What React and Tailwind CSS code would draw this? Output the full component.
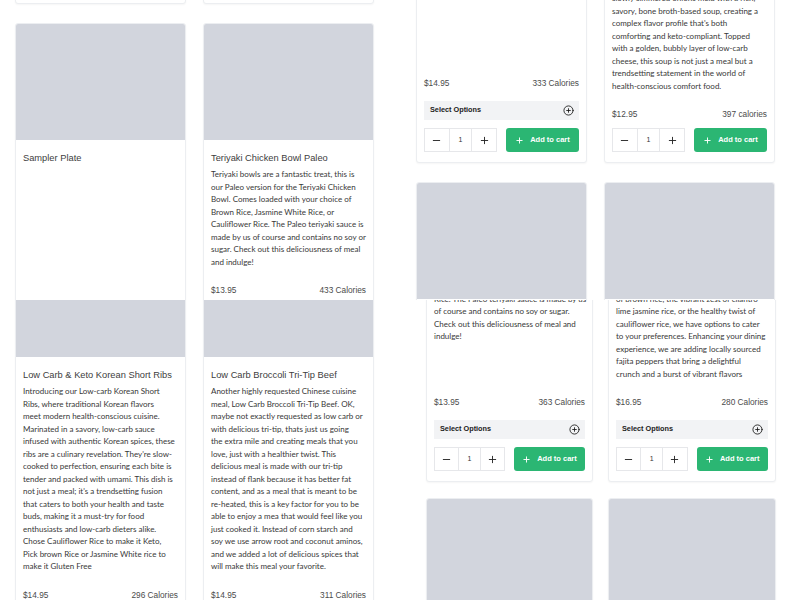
import { Minus, Plus, CirclePlus } from 'lucide-react'

// each quarter of the page is a 400x300 window onto a product grid at a different scroll spot
const Card = ({ width = 'w-[171px]', title, lines = [], price, cal, options, cart }) => (
  <div className={`${width} shrink-0 flex flex-col bg-white border border-[#eceef1] rounded-[3px] shadow-[0_1px_2px_rgba(0,0,0,0.04)] overflow-hidden`}>
    <div className="h-[116px] shrink-0 bg-[#d2d5dd]" />
    <div className="flex-1 flex flex-col px-[7px] pt-[12px] pb-[10px]">
      {title && (
        <h3 className="text-[9.3px] leading-[12px] text-[#404040] font-['Liberation_Sans',Arial,sans-serif] whitespace-nowrap">
          {title}
        </h3>
      )}
      {lines.length > 0 && (
        <p className="mt-[4px] text-[8px] leading-[12.5px] text-[#383838] font-['Lato','Open_Sans',sans-serif]">
          {lines.map((l, i) => (
            <span key={i} className="block whitespace-nowrap">{l}</span>
          ))}
        </p>
      )}
      {price && (
        <div className="mt-auto pt-[16px] flex flex-col font-['Liberation_Sans',Arial,sans-serif]">
          <div className="flex justify-between text-[8.3px] leading-[12px] text-[#4b4b4b]">
            <span>{price}</span>
            <span>{cal}</span>
          </div>
          {options && (
            <div className="mt-[12px] h-[19px] bg-[#f2f3f5] flex items-center justify-between pl-[6px] pr-[5px]">
              <span className="text-[7.3px] font-bold text-[#222]">Select Options</span>
              <CirclePlus size={11} strokeWidth={1.8} color="#111" />
            </div>
          )}
          {cart && (
            <div className="mt-[8px] grid grid-cols-2 gap-[9px] h-[24px]">
              <div className="grid grid-cols-3 border border-[#e6e7ea]">
                <div className="flex items-center justify-center">
                  <Minus size={11} strokeWidth={2} color="#222" />
                </div>
                <div className="flex items-center justify-center border-x border-[#e6e7ea] text-[7px] text-[#333]">1</div>
                <div className="flex items-center justify-center">
                  <Plus size={11} strokeWidth={2} color="#222" />
                </div>
              </div>
              <button className="bg-[#2bb673] rounded-[3px] text-white font-bold text-[7.5px] flex items-center justify-center gap-[6px]">
                <Plus size={9} strokeWidth={2.5} />
                Add to cart
              </button>
            </div>
          )}
        </div>
      )}
    </div>
  </div>
)

const Tile = ({ children }) => (
  <div className="w-[400px] h-[300px] overflow-hidden bg-white flex flex-col">{children}</div>
)

const teriyakiA = [
  'Teriyaki bowls are a fantastic treat, this is',
  'our Paleo version for the Teriyaki Chicken',
  'Bowl. Comes loaded with your choice of',
  'Brown Rice, Jasmine White Rice, or',
  'Cauliflower Rice. The Paleo teriyaki sauce is',
  'made by us of course and contains no soy or',
  'sugar. Check out this deliciousness of meal',
  'and indulge!',
]

const teriyakiB = [
  'Teriyaki bowls are a fantastic treat. Comes',
  'loaded with your choice of Cauliflower',
  'Rice. The Paleo teriyaki sauce is made by us',
  'of course and contains no soy or sugar.',
  'Check out this deliciousness of meal and',
  'indulge!',
]

const shortRibs = [
  'Introducing our Low-carb Korean Short',
  'Ribs, where traditional Korean flavors',
  'meet modern health-conscious cuisine.',
  'Marinated in a savory, low-carb sauce',
  'infused with authentic Korean spices, these',
  "ribs are a culinary revelation. They're slow-",
  'cooked to perfection, ensuring each bite is',
  'tender and packed with umami. This dish is',
  "not just a meal; it's a trendsetting fusion",
  'that caters to both your health and taste',
  'buds, making it a must-try for food',
  'enthusiasts and low-carb dieters alike.',
  'Chose Cauliflower Rice to make it Keto,',
  'Pick brown Rice or Jasmine White rice to',
  'make it Gluten Free',
]

const triTip = [
  'Another highly requested Chinese cuisine',
  'meal, Low Carb Broccoli Tri-Tip Beef. OK,',
  'maybe not exactly requested as low carb or',
  'with delicious tri-tip, thats just us going',
  'the extra mile and creating meals that you',
  'love, just with a healthier twist. This',
  'delicious meal is made with our tri-tip',
  'instead of flank because it has better fat',
  'content, and as a meal that is meant to be',
  're-heated, this is a key factor for you to be',
  'able to enjoy a mea that would feel like you',
  'just cooked it. Instead of corn starch and',
  'soy we use arrow root and coconut aminos,',
  'and we added a lot of delicious spices that',
  'will make this meal your favorite.',
]

const onionSoup = [
  'Dive into our Keto French Onion Soup, where',
  'caramelized, slow-cooked and tender onions',
  'slowly simmered onions meld with a rich,',
  'savory, bone broth-based soup, creating a',
  "complex flavor profile that's both",
  'comforting and keto-compliant. Topped',
  'with a golden, bubbly layer of low-carb',
  'cheese, this soup is not just a meal but a',
  'trendsetting statement in the world of',
  'health-conscious comfort food.',
]

const beefStew = [
  'A hearty low carb beef and vegetable stew,',
  'slow cooked until tender and full of flavor.',
]

const fajita = [
  'Savor the bold taste of our Chicken Fajita',
  'Bowl, grilled to perfection. With a choice',
  'of brown rice, the vibrant zest of cilantro',
  'lime jasmine rice, or the healthy twist of',
  'cauliflower rice, we have options to cater',
  'to your preferences. Enhancing your dining',
  'experience, we are adding locally sourced',
  'fajita peppers that bring a delightful',
  'crunch and a burst of vibrant flavors',
]

export default function App() {
  return (
    <div className="w-[800px] h-[600px] grid grid-cols-2 bg-white overflow-hidden">
      {/* top left */}
      <Tile>
        <div className="h-[4px] shrink-0 flex flex-col justify-end">
          <div className="shrink-0 flex gap-[17px] pl-[15px]">
            <Card />
            <Card />
          </div>
        </div>
        <div className="shrink-0 mt-[19px] flex gap-[17px] pl-[15px]">
          <Card title="Sampler Plate" />
          <Card title="Teriyaki Chicken Bowl Paleo" lines={teriyakiA} price="$13.95" cal="433 Calories" options cart />
        </div>
      </Tile>

      {/* top right */}
      <Tile>
        <div className="h-[163px] shrink-0 flex flex-col justify-end">
          <div className="shrink-0 flex gap-[17px] pl-[16px]">
            <Card title="Low Carb Beef Stew" lines={beefStew} price="$14.95" cal="333 Calories" options cart />
            <Card title="Keto French Onion Soup" lines={onionSoup} price="$12.95" cal="397 calories" cart />
          </div>
        </div>
        <div className="shrink-0 mt-[19px] flex gap-[17px] pl-[16px]">
          <Card />
          <Card />
        </div>
      </Tile>

      {/* bottom left */}
      <Tile>
        <div className="shrink-0 mt-[-60px] flex gap-[17px] pl-[15px]">
          <Card title="Low Carb & Keto Korean Short Ribs" lines={shortRibs} price="$14.95" cal="296 Calories" options cart />
          <Card title="Low Carb Broccoli Tri-Tip Beef" lines={triTip} price="$14.95" cal="311 Calories" options cart />
        </div>
      </Tile>

      {/* bottom right */}
      <Tile>
        <div className="h-[182px] shrink-0 flex flex-col justify-end">
          <div className="shrink-0 flex gap-[15px] pl-[26px]">
            <Card width="w-[167px]" title="Teriyaki Chicken Bowl Keto" lines={teriyakiB} price="$13.95" cal="363 Calories" options cart />
            <Card width="w-[168px]" title="Chicken Fajita Bowl" lines={fajita} price="$16.95" cal="280 Calories" options cart />
          </div>
        </div>
        <div className="shrink-0 mt-[16px] flex gap-[15px] pl-[26px]">
          <Card width="w-[167px]" />
          <Card width="w-[168px]" />
        </div>
      </Tile>
    </div>
  )
}
